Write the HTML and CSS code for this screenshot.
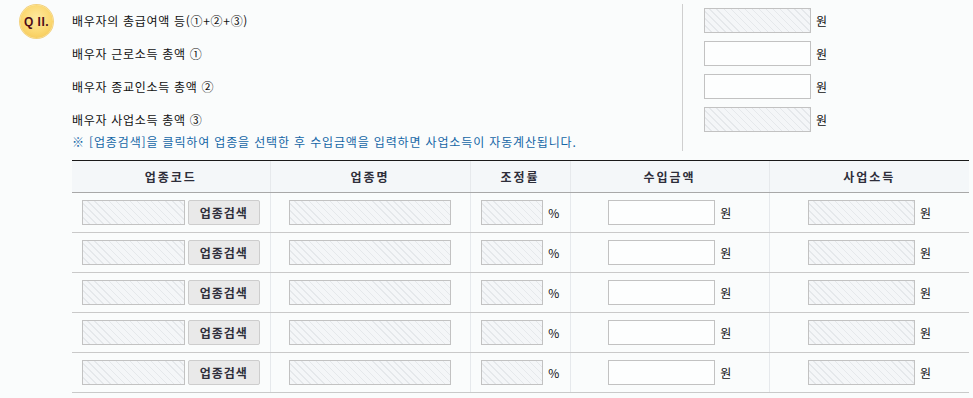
FILE: index.html
```html
<!DOCTYPE html>
<html lang="ko">

<head>
    <meta charset="UTF-8">
    <title>배우자 소득</title>
    <link rel="stylesheet" href="styles.css">
</head>

<body>
    <div class="sec-top">
        <div class="sec-left">
            <span class="badge">Q II.</span>
            <div class="labels">
                <div class="row">배우자의 총급여액 등(①+②+③)</div>
                <div class="row">배우자 근로소득 총액 ①</div>
                <div class="row">배우자 종교인소득 총액 ②</div>
                <div class="row">배우자 사업소득 총액 ③</div>
                <p class="note">※ [업종검색]을 클릭하여 업종을 선택한 후 수입금액을 입력하면 사업소득이 자동계산됩니다.</p>
            </div>
        </div>
        <div class="sec-right">
            <div class="row"><input class="inp inp-wide hatch" readonly> <span class="unit">원</span></div>
            <div class="row"><input class="inp inp-wide"> <span class="unit">원</span></div>
            <div class="row"><input class="inp inp-wide"> <span class="unit">원</span></div>
            <div class="row"><input class="inp inp-wide hatch" readonly> <span class="unit">원</span></div>
        </div>
    </div>

    <table class="biz-table">
        <colgroup>
            <col class="c1">
            <col class="c2">
            <col class="c3">
            <col class="c4">
            <col class="c5">
        </colgroup>
        <thead>
            <tr>
                <th>업종코드</th>
                <th>업종명</th>
                <th>조정률</th>
                <th>수입금액</th>
                <th>사업소득</th>
            </tr>
        </thead>
        <tbody id="biz-rows"></tbody>
    </table>

    <script>
        const tbody = document.getElementById('biz-rows');
        for (let i = 0; i < 5; i++) {
            tbody.innerHTML += `
        <tr>
          <td><input class="inp inp-code hatch" readonly><button class="btn-search">업종검색</button></td>
          <td><input class="inp inp-name hatch" readonly></td>
          <td><input class="inp inp-rate hatch" readonly> <span class="unit">%</span></td>
          <td><input class="inp inp-wide"> <span class="unit">원</span></td>
          <td><input class="inp inp-wide hatch" readonly> <span class="unit">원</span></td>
        </tr>`;
        }
    </script>
</body>

</html>
```

FILE: styles.css
```css
* {
    margin: 0;
    padding: 0;
    box-sizing: border-box;
}

body {
    font-family: "Noto Sans CJK KR", "Noto Sans", sans-serif;
    font-size: 12px;
    color: #111;
    background-color: #fafcfc;
}

/* Top section */
.sec-top {
    display: flex;
    padding-top: 4px;
}

.sec-left {
    position: relative;
    width: 683px;
    border-right: 1px solid #cfcfcf;
    padding-left: 72px;
    height: 147px;
}

.badge {
    position: absolute;
    left: 20px;
    top: 1px;
    width: 33px;
    height: 33px;
    border-radius: 50%;
    background: radial-gradient(circle at 50% 40%, #fde9a0 0%, #fbd871 55%, #f2c24e 100%);
    box-shadow: 0 0 0 1px #f3d27e;
    color: #4d0c18;
    font-family: "Liberation Sans", Arial, sans-serif;
    font-weight: bold;
    font-size: 12px;
    letter-spacing: 0.5px;
    display: flex;
    align-items: center;
    justify-content: center;
}

.labels .row {
    letter-spacing: 0.7px;
}

.row {
    height: 33px;
    display: flex;
    align-items: center;
}

.note {
    color: #1466a6;
    line-height: 14px;
    margin-top: -1px;
    letter-spacing: 0.85px;
}

.sec-right {
    padding-left: 21px;
}

.sec-right .row {
    gap: 3px;
}

/* Inputs */
.inp {
    height: 25px;
    border: 1px solid #c2c2c2;
    background: #fdfefe;
    vertical-align: middle;
    font-family: inherit;
    font-size: 12px;
}

.hatch {
    background-color: #f4f6f8;
    background-image: repeating-linear-gradient(45deg, #f4f6f8 0, #f4f6f8 4px, #e5e8eb 4px, #e5e8eb 5px);
}

.inp-wide {
    width: 107px;
}

.inp-code {
    width: 103px;
}

.inp-name {
    width: 162px;
}

.inp-rate {
    width: 62px;
}

.unit {
    vertical-align: middle;
    margin-left: 2px;
}

/* Table */
.biz-table {
    margin: 9px 0 0 72px;
    width: 897px;
    border-collapse: collapse;
    table-layout: fixed;
}

.c1 { width: 198px; }
.c2 { width: 200px; }
.c3 { width: 100px; }
.c4 { width: 199px; }
.c5 { width: 200px; }

.biz-table th {
    height: 32px;
    border-top: 1px solid #1a1a1a;
    border-bottom: 1px solid #a8a8a8;
    background-color: #f4f7f9;
    color: #2e2e3a;
    font-weight: bold;
    text-align: center;
    letter-spacing: 2px;
}

.biz-table td {
    height: 40px;
    border-bottom: 1px solid #c9c9c9;
    text-align: center;
    white-space: nowrap;
}

.biz-table th + th,
.biz-table td + td {
    border-left: 1px solid #e6e9ec;
}

.btn-search {
    width: 72px;
    height: 25px;
    margin-left: 3px;
    vertical-align: middle;
    background-color: #e9e9e9;
    border: 1px solid #cdcdcd;
    border-radius: 2px;
    color: #2e2e3a;
    font-family: inherit;
    font-size: 12px;
    font-weight: bold;
    letter-spacing: 1px;
}
```
